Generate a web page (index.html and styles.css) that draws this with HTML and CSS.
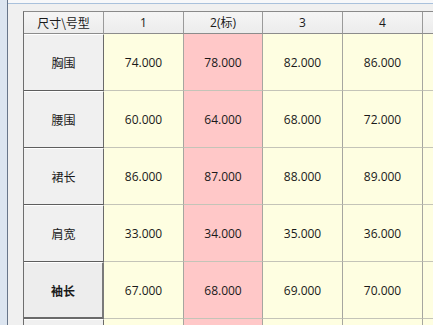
FILE: index.html
```html
<!DOCTYPE html>
<html lang="zh">
<head>
<meta charset="utf-8">
<link rel="stylesheet" href="styles.css">
</head>
<body>
<div class="frame">
  <div class="edge"></div>
  <div class="panel">
    <div class="topline"></div>
    <div class="area">
      <div class="grid">
        <div class="hd corner">尺寸\号型</div>
        <div class="hd">1</div>
        <div class="hd">2(标)</div>
        <div class="hd">3</div>
        <div class="hd">4</div>
        <div class="hd"></div>

        <div class="rh">胸围</div>
        <div class="c">74.000</div>
        <div class="c std">78.000</div>
        <div class="c">82.000</div>
        <div class="c">86.000</div>
        <div class="c"></div>

        <div class="rh">腰围</div>
        <div class="c">60.000</div>
        <div class="c std">64.000</div>
        <div class="c">68.000</div>
        <div class="c">72.000</div>
        <div class="c"></div>

        <div class="rh">裙长</div>
        <div class="c">86.000</div>
        <div class="c std">87.000</div>
        <div class="c">88.000</div>
        <div class="c">89.000</div>
        <div class="c"></div>

        <div class="rh">肩宽</div>
        <div class="c">33.000</div>
        <div class="c std">34.000</div>
        <div class="c">35.000</div>
        <div class="c">36.000</div>
        <div class="c"></div>

        <div class="rh sel">袖长</div>
        <div class="c">67.000</div>
        <div class="c std">68.000</div>
        <div class="c">69.000</div>
        <div class="c">70.000</div>
        <div class="c"></div>

        <div class="rh"></div>
        <div class="c"></div>
        <div class="c std"></div>
        <div class="c"></div>
        <div class="c"></div>
        <div class="c"></div>
      </div>
    </div>
  </div>
</div>
</body>
</html>
```

FILE: styles.css
```css
html, body {
  margin: 0;
  padding: 0;
  width: 433px;
  height: 325px;
  overflow: hidden;
  background: #f0f0f0;
  font-family: "Open Sans", "Noto Sans CJK SC", sans-serif;
  font-size: 12px;
  color: #1a1a1a;
}

.frame {
  display: flex;
  height: 325px;
}

.edge {
  width: 7px;
  flex: none;
  background: #dce5f0;
  border-right: 1px solid #68768a;
}

.panel {
  flex: 1;
  display: flex;
  flex-direction: column;
  background: #f0f0f0;
  min-width: 0;
}

.topline {
  height: 3px;
  background: #f7f8fa;
  border-bottom: 1px solid #a9c1dc;
  flex: none;
}

.area {
  padding: 7px 0 0 15px;
  overflow: hidden;
}

.grid {
  display: grid;
  grid-template-columns: 80px 80px 79px 80px 80px 80px;
  grid-template-rows: 22px repeat(6, 57px);
  border-top: 1px solid #8a8a8a;
  border-left: 1px solid #6e6e6e;
  width: max-content;
}

.grid > div {
  display: flex;
  align-items: center;
  justify-content: center;
  box-sizing: border-box;
  white-space: nowrap;
}

.hd {
  background: linear-gradient(#f5f5f5, #ececec);
  border-right: 1px solid #9a9a9a;
  border-bottom: 1px solid #8c8c8c;
  padding-bottom: 1px;
}

.corner {
  font-family: "Noto Sans CJK SC", sans-serif;
}

.rh {
  font-family: "Noto Sans CJK SC", sans-serif;
  background: #f0f0f0;
  border-top: 1px solid #ffffff;
  border-right: 1px solid #6a6a6a;
  border-bottom: 1px solid #5e5e5e;
}

.rh.sel {
  font-weight: bold;
  border-bottom: 2px solid #6a6a6a;
  border-right: 2px solid #7a7a7a;
  background: #ededed;
}

.c {
  background: #fefee1;
  border-right: 1px solid #a6a6a0;
  border-bottom: 1px solid #c4c4b8;
}

.c.std {
  background: #ffc8c8;
}
```
